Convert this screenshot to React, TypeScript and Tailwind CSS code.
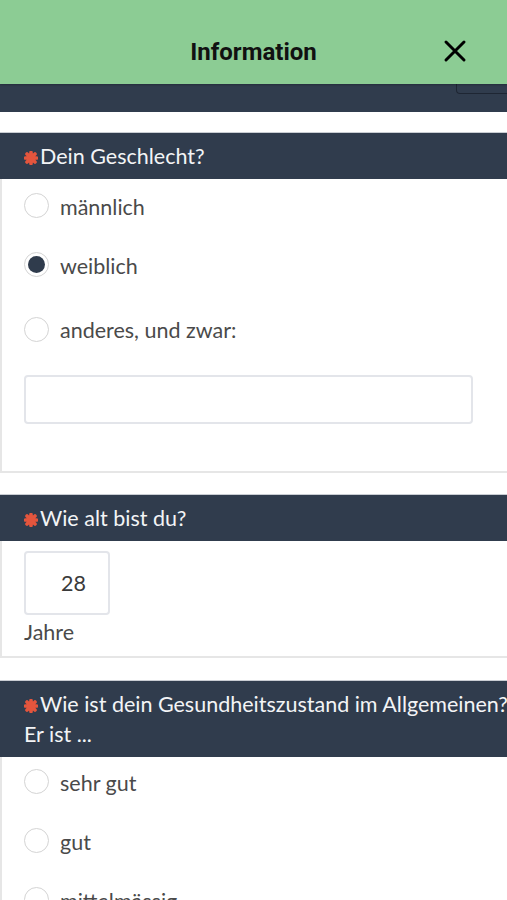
import React from 'react'

const lato = { fontFamily: 'Lato, "Open Sans", sans-serif' }

function Radio({ checked = false }: { checked?: boolean }) {
  return (
    <span className="flex h-[25px] w-[25px] shrink-0 items-center justify-center rounded-full border border-[#d4d4d4] bg-white">
      {checked && <span className="h-[17px] w-[17px] rounded-full bg-[#2f3b4c]" />}
    </span>
  )
}

function Option({ label, checked }: { label: string; checked?: boolean }) {
  return (
    <div className="flex h-[59px] items-center gap-[11px] pl-[22px]">
      <Radio checked={checked} />
      <span className="pt-[3px] text-[21.5px] text-[#4a4a4a]">{label}</span>
    </div>
  )
}

function Star() {
  return (
    <svg className="mr-[2px] inline-block align-[-1px]" width="14" height="14" viewBox="0 0 14 14" stroke="#e4553d" strokeWidth="3.6" strokeLinecap="round">
      <path d="M7 1.5v11M1.5 7h11M3 3l8 8M11 3l-8 8" />
    </svg>
  )
}

function Question({ children }: { children: React.ReactNode }) {
  return (
    <div className="-ml-[2px] border-t border-[#c9cdd3] bg-[#303c4d] py-[8px] pl-6 pr-6 text-[21.5px] leading-[30px] text-[#f3f4f6]">
      <Star />
      {children}
    </div>
  )
}

export default function App() {
  return (
    <div className="h-[900px] w-[507px] overflow-hidden bg-white" style={lato}>
      {/* Header */}
      <header className="relative flex h-[84px] items-center justify-center bg-[#8ccc94] pt-[20px] shadow-[0_1px_2px_rgba(0,0,0,0.25)]">
        <h1
          className="text-[24px] font-bold text-[#111]"
          style={{ fontFamily: 'Roboto, sans-serif' }}
        >
          Information
        </h1>
        <button className="absolute right-[40px] top-[39px] text-black">
          <svg width="24" height="24" viewBox="0 0 24 24" fill="none" stroke="currentColor" strokeWidth="3" strokeLinecap="round">
            <path d="M3 3l18 18M21 3L3 21" />
          </svg>
        </button>
      </header>

      {/* Previous section tail */}
      <div className="flex h-[28px] justify-end bg-[#303c4d]">
        <div className="h-[10px] w-[51px] rounded-bl-[4px] border-b border-l border-[#1e2633]" />
      </div>

      <div className="w-[548px] pt-5">
        {/* Gender */}
        <section className="border-b-2 border-l-2 border-[#e6e6e6]">
          <Question>Dein Geschlecht?</Question>
          <div className="-mt-[3px] pb-[47px]">
            <Option label="männlich" />
            <Option label="weiblich" checked />
            <div className="flex h-[66px] items-center gap-[11px] pl-[22px] pt-[4px]">
              <Radio />
              <span className="pt-[3px] text-[21.5px] text-[#4a4a4a]">anderes, und zwar:</span>
            </div>
            <div className="ml-[22px] mt-[15px] h-[49px] w-[449px] rounded-[4px] border-2 border-[#e3e5ea] bg-white" />
          </div>
        </section>

        <div className="h-[21px]" />

        {/* Age */}
        <section className="border-b-2 border-l-2 border-[#e6e6e6]">
          <Question>Wie alt bist du?</Question>
          <div className="pb-[9px] pl-[22px] pt-[10px]">
            <div className="flex h-[64px] w-[86px] items-center justify-end rounded-[4px] border-2 border-[#e3e5ea] pr-[22px] text-[21.5px] text-[#3a3a3a]">
              28
            </div>
            <div className="mt-[2px] text-[21.5px] leading-[30px] text-[#4a4a4a]">Jahre</div>
          </div>
        </section>

        <div className="h-[22px]" />

        {/* Health */}
        <section className="border-l-2 border-[#e6e6e6]">
          <Question>Wie ist dein Gesundheitszustand im Allgemeinen? Er ist ...</Question>
          <div className="-mt-[5px]">
            <Option label="sehr gut" />
            <Option label="gut" />
            <Option label="mittelmässig" />
            <Option label="schlecht" />
          </div>
        </section>
      </div>
    </div>
  )
}
